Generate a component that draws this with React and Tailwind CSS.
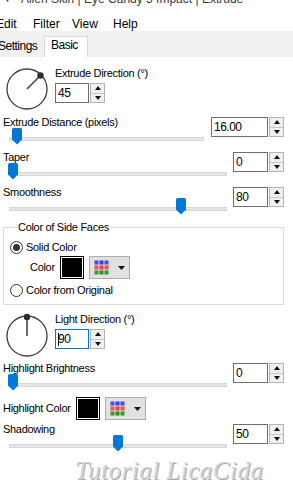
import React from 'react';

const Dial = ({ angle, cy }) => {
  const cx = 24;
  const rad = (angle * Math.PI) / 180;
  const kx = cx + 19 * Math.cos(rad);
  const ky = cy - 19 * Math.sin(rad);
  return (
    <svg width="52" height="46" viewBox="0 0 52 46" className="shrink-0">
      <circle cx={cx} cy={cy} r="20" fill="none" stroke="#3c3c3c" strokeWidth="1.3" />
      <line x1={cx} y1={cy} x2={kx} y2={ky} stroke="#3c3c3c" strokeWidth="1.5" />
      <circle cx={kx} cy={ky} r="3.2" fill="#2b2b2b" />
    </svg>
  );
};

const Spin = ({ value, inputClass, focused }) => (
  <div className="flex h-[20px] shrink-0 gap-[1px]">
    <div
      className={`flex h-full items-center border pl-[2px] text-[12px] leading-[14px] tracking-[-0.5px] ${inputClass} ${
        focused ? 'border-[#0078d7]' : 'border-[#6e6e6e]'
      }`}
    >
      {focused && <span className="mr-[-1px] h-[13px] w-[1px] bg-black" />}
      {value}
    </div>
    <div className="flex h-full w-[15px] flex-col border border-[#b4b4b4] bg-[#f0f0f0]">
      <div className="flex flex-1 items-center justify-center border-b border-[#c8c8c8]">
        <svg width="6" height="4" viewBox="0 0 6 4">
          <polygon points="0,4 6,4 3,0" fill="#111" />
        </svg>
      </div>
      <div className="flex flex-1 items-center justify-center">
        <svg width="6" height="4" viewBox="0 0 6 4">
          <polygon points="0,0 6,0 3,4" fill="#111" />
        </svg>
      </div>
    </div>
  </div>
);

const Thumb = ({ left }) => (
  <svg width="10" height="17" viewBox="0 0 10 17" className="absolute top-0" style={{ left }}>
    <path d="M1.5 0 H8.5 Q10 0 10 1.5 V11.5 L5 16.5 L0 11.5 V1.5 Q0 0 1.5 0 Z" fill="#0078d7" />
  </svg>
);

const SliderRow = ({ label, value, thumb, trackClass, inputClass, className }) => (
  <div className={`flex items-start ${className}`}>
    <div className="flex flex-1 flex-col">
      <div className="-mt-[1px] pl-[3px] leading-[13px]">{label}</div>
      <div className="relative -mt-[1px] h-[17px] pt-[9px]">
        <div className={`ml-[9px] h-[4px] border border-[#d6d6d6] bg-[#e7e7e7] ${trackClass}`} />
        <Thumb left={thumb} />
      </div>
    </div>
    <Spin value={value} inputClass={inputClass} />
  </div>
);

const Swatch = () => (
  <div className="h-[23px] w-[24px] shrink-0 border border-black bg-white p-[1px]">
    <div className="h-full w-full bg-black" />
  </div>
);

const PaletteButton = () => (
  <div className="flex h-[23px] w-[41px] shrink-0 items-center border border-[#adadad] bg-[#e1e1e1] pl-[4px]">
    <svg width="15" height="15" viewBox="0 0 15 15">
      <rect x="0" y="0" width="15" height="15" fill="#d8d8d8" />
      <rect x="0.5" y="0.5" width="4" height="4" fill="#4848ff" />
      <rect x="5.5" y="0.5" width="4" height="4" fill="#3a3af0" />
      <rect x="10.5" y="0.5" width="4" height="4" fill="#4848ff" />
      <rect x="0.5" y="5.5" width="4" height="4" fill="#ff4c4c" />
      <rect x="5.5" y="5.5" width="4" height="4" fill="#f04040" />
      <rect x="10.5" y="5.5" width="4" height="4" fill="#ff4c4c" />
      <rect x="0.5" y="10.5" width="4" height="4" fill="#2f9e2f" />
      <rect x="5.5" y="10.5" width="4" height="4" fill="#279027" />
      <rect x="10.5" y="10.5" width="4" height="4" fill="#2f9e2f" />
    </svg>
    <svg width="7" height="4" viewBox="0 0 7 4" className="ml-[9px]">
      <polygon points="0,0 7,0 3.5,4" fill="#111" />
    </svg>
  </div>
);

const Radio = ({ checked }) => (
  <div className="flex h-[13px] w-[13px] shrink-0 items-center justify-center rounded-full border border-[#333] bg-white">
    {checked && <div className="h-[7px] w-[7px] rounded-full bg-[#333]" />}
  </div>
);

export default function App() {
  return (
    <div className="h-[500px] w-[293px] overflow-hidden bg-white font-['Liberation_Sans',Arial,sans-serif] text-black">
      {/* title bar, cut off */}
      <div className="h-[6px] overflow-hidden">
        <div className="-mt-[8px] flex items-center whitespace-nowrap pl-[3px] text-[12px] leading-[14px] text-[#3a3a3a]">
          <span className="text-[9px]">▼</span>
          <span className="ml-[9px]">Alien Skin | Eye Candy 5 Impact | Extrude</span>
        </div>
      </div>

      {/* menu */}
      <div className="flex h-[25px] whitespace-nowrap pt-[11px] text-[12px] leading-[14px]">
        <span className="-ml-[4px] w-[37px]">Edit</span>
        <span className="w-[39px]">Filter</span>
        <span className="w-[41px]">View</span>
        <span>Help</span>
      </div>

      {/* tabs */}
      <div className="flex h-[26px] bg-[#f0f0f0] text-[12px] leading-[14px] tracking-[-0.5px]">
        <div className="-ml-[2px] w-[46px] pt-[8px]">Settings</div>
        <div className="mt-[5px] h-[21px] w-[44px] border border-b-0 border-[#d9d9d9] bg-white pl-[6px] pt-[1px]">Basic</div>
      </div>

      {/* content */}
      <div className="pr-[9px] text-[11px] leading-[13px] tracking-[-0.3px]">
        <div className="mt-[10px] flex h-[46px] pl-[3px]">
          <Dial angle={45} cy={22} />
          <div>
            <div>Extrude Direction (°)</div>
            <div className="mt-[3px]">
              <Spin value="45" inputClass="w-[34px]" />
            </div>
          </div>
        </div>

        <SliderRow className="mt-[4px]" label="Extrude Distance (pixels)" value="16.00" thumb={12} trackClass="w-[195px]" inputClass="w-[57px]" />
        <SliderRow className="mt-[7px]" label="Taper" value="0" thumb={8} trackClass="w-[218px]" inputClass="w-[35px]" />
        <SliderRow className="mt-[7px]" label="Smoothness" value="80" thumb={176} trackClass="w-[218px]" inputClass="w-[35px]" />

        <fieldset className="ml-[3px] mt-[6px] border border-[#dcdcdc] pb-[7px] pl-[6px]">
          <legend className="ml-[7px] px-[1px] leading-[13px]">Color of Side Faces</legend>
          <div className="mt-[7px] flex items-center gap-[3px]">
            <Radio checked />
            <span>Solid Color</span>
          </div>
          <div className="mt-[2px] flex items-center pl-[20px]">
            <span className="w-[30px]">Color</span>
            <Swatch />
            <div className="ml-[5px]">
              <PaletteButton />
            </div>
          </div>
          <div className="mt-[5px] flex items-center gap-[3px]">
            <Radio />
            <span>Color from Original</span>
          </div>
        </fieldset>

        <div className="mt-[8px] flex h-[46px] pl-[3px]">
          <Dial angle={90} cy={23} />
          <div>
            <div>Light Direction (°)</div>
            <div className="mt-[3px]">
              <Spin value="90" inputClass="w-[34px]" focused />
            </div>
          </div>
        </div>

        <SliderRow className="mt-[4px]" label="Highlight Brightness" value="0" thumb={8} trackClass="w-[218px]" inputClass="w-[35px]" />

        <div className="mt-[6px] flex items-center pl-[3px]">
          <span className="w-[73px]">Highlight Color</span>
          <Swatch />
          <div className="ml-[5px]">
            <PaletteButton />
          </div>
        </div>

        <SliderRow className="mt-[4px]" label="Shadowing" value="50" thumb={113} trackClass="w-[218px]" inputClass="w-[35px]" />

        <div className="ml-[75px] mt-[5px] whitespace-nowrap font-['Liberation_Serif',serif] text-[25px] italic leading-[28px] tracking-[0.5px] text-[#d6d6d6] [text-shadow:1px_1px_0_#ababab]">
          Tutorial LicaCida
        </div>
      </div>
    </div>
  );
}
